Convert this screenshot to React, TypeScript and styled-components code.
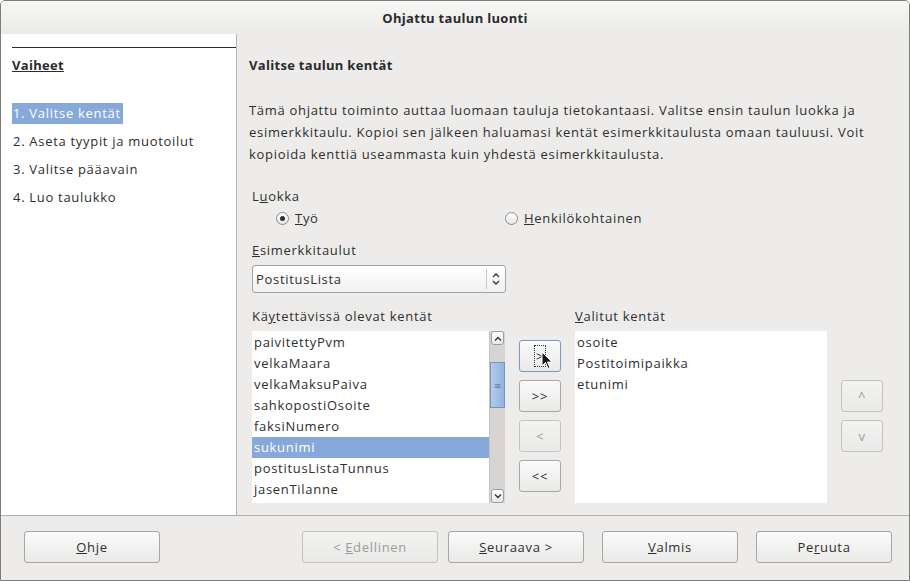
import React from 'react';
import styled, {createGlobalStyle} from "styled-components";

const GlobalStyle = createGlobalStyle`
    html, body {
        margin: 0;
        padding: 0;
        background: #ffffff;
    }
    body {
        font-family: "Open Sans", "DejaVu Sans", sans-serif;
        font-size: 13px;
        letter-spacing: 0.7px;
        color: #2e2e2e;
    }
`;

const Window = styled.div`
    width: 910px;
    height: 581px;
    box-sizing: border-box;
    border: 1px solid #7c7c7c;
    border-radius: 5px 5px 0 0;
    display: flex;
    flex-direction: column;
    overflow: hidden;
    background: #edeceb;
`;

const TitleBar = styled.div`
    height: 33px;
    flex-shrink: 0;
    display: flex;
    align-items: center;
    justify-content: center;
    font-weight: 700;
    font-size: 13px;
    letter-spacing: 0.3px;
    color: #2b2b2b;
    background: linear-gradient(#f7f7f6, #ebeae9);
`;

const Body = styled.div`
    flex: 1;
    display: flex;
    min-height: 0;
`;

const Sidebar = styled.div`
    width: 236px;
    flex-shrink: 0;
    background: #ffffff;
    border-right: 1px solid #b8b7b5;
    padding: 13px 0 0 11px;
    box-sizing: border-box;
`;

const SideRule = styled.div`
    height: 1px;
    background: #2b2b2b;
`;

const SideTitle = styled.div`
    margin-top: 8px;
    line-height: 18px;
    font-weight: 700;
    letter-spacing: 0.3px;
    text-decoration: underline;
    color: #2b2b2b;
`;

const StepList = styled.div`
    margin-top: 29px;
    display: flex;
    flex-direction: column;
    gap: 7px;
`;

const Step = styled.div<{ $active?: boolean }>`
    align-self: flex-start;
    line-height: 21px;
    padding: 0 2px 0 1px;
    color: ${p => p.$active ? '#ffffff' : '#2e2e2e'};
    background: ${p => p.$active ? '#86a9d9' : 'transparent'};
`;

const Main = styled.div`
    flex: 1;
    padding: 21px 0 0 12px;
    box-sizing: border-box;
`;

const Heading = styled.div`
    line-height: 20px;
    font-weight: 700;
    letter-spacing: 0.3px;
    color: #2b2b2b;
`;

const Intro = styled.p`
    margin: 24px 0 0;
    line-height: 22px;
    white-space: nowrap;
`;

const Indented = styled.div`
    padding-left: 3px;
`;

const Label = styled.div<{ $top: number }>`
    margin-top: ${p => p.$top}px;
    line-height: 20px;
`;

const Mn = styled.span`
    text-decoration: underline;
`;

const RadioRow = styled.div`
    display: grid;
    grid-template-columns: 229px auto;
    padding-left: 24px;
    margin-top: 2px;
    height: 20px;
    align-items: center;
`;

const RadioItem = styled.label`
    display: flex;
    align-items: center;
    gap: 6px;
`;

const RadioDot = styled.span<{ $checked?: boolean }>`
    width: 11px;
    height: 11px;
    border-radius: 50%;
    border: 1px solid #8a8a8a;
    background: linear-gradient(#ffffff, #e6e6e6);
    display: flex;
    align-items: center;
    justify-content: center;
    &::after {
        content: "";
        width: 5px;
        height: 5px;
        border-radius: 50%;
        background: ${p => p.$checked ? '#2e2e2e' : 'transparent'};
    }
`;

const Combo = styled.div`
    margin-top: 5px;
    width: 254px;
    height: 28px;
    box-sizing: border-box;
    border: 1px solid #a3a3a3;
    border-radius: 3px;
    background: linear-gradient(#ffffff, #f1f1f1);
    display: flex;
    align-items: center;
`;

const ComboText = styled.div`
    flex: 1;
    padding-left: 3px;
`;

const ComboArrow = styled.div`
    width: 18px;
    height: 20px;
    border-left: 1px solid #c8c8c8;
    display: flex;
    align-items: center;
    justify-content: center;
`;

const FieldsGrid = styled.div`
    margin-top: 13px;
    display: grid;
    grid-template-columns: 253px 42px 252px 42px;
    column-gap: 14px;
    grid-template-rows: 20px 172px;
    row-gap: 5px;
`;

const FieldLabel = styled.div`
    line-height: 20px;
`;

const ListBox = styled.div`
    background: #ffffff;
    display: flex;
    overflow: hidden;
`;

const ListItems = styled.div`
    flex: 1;
    padding-top: 1px;
`;

const ListItem = styled.div<{ $selected?: boolean }>`
    height: 21px;
    line-height: 21px;
    padding-left: 2px;
    color: ${p => p.$selected ? '#ffffff' : '#2e2e2e'};
    background: ${p => p.$selected ? '#86a9d9' : 'transparent'};
`;

const ScrollBar = styled.div`
    width: 15px;
    display: flex;
    flex-direction: column;
    background: #d6d5d4;
    border-left: 1px solid #c4c3c2;
`;

const ScrollStep = styled.div`
    height: 14px;
    margin: 0 1px;
    box-sizing: border-box;
    border: 1px solid #9c9c9c;
    border-radius: 3px;
    background: linear-gradient(#ffffff, #e8e8e8);
    display: flex;
    align-items: center;
    justify-content: center;
`;

const ScrollTrack = styled.div`
    flex: 1;
    padding-top: 17px;
`;

const ScrollThumb = styled.div`
    height: 46px;
    box-sizing: border-box;
    border: 1px solid #6f95c8;
    background: linear-gradient(90deg, #b5cbea, #93b3df);
    display: flex;
    align-items: center;
    justify-content: center;
    color: #5a7fb3;
    font-size: 9px;
    letter-spacing: 0;
`;

const ButtonColumn = styled.div<{ $top: number }>`
    padding-top: ${p => p.$top}px;
    display: flex;
    flex-direction: column;
    gap: 8px;
`;

const Button = styled.button<{ $focus?: boolean }>`
    position: relative;
    height: 32px;
    box-sizing: border-box;
    border: 1px solid ${p => p.$focus ? '#7b98c4' : '#a8a7a6'};
    border-radius: 3px;
    background: linear-gradient(#fbfbfb, #e9e9e8);
    font-family: "Open Sans", "DejaVu Sans", sans-serif;
    font-size: 13px;
    letter-spacing: 0.7px;
    color: #2e2e2e;
    padding: 0;
    display: flex;
    align-items: center;
    justify-content: center;
    &:disabled {
        color: #9b9b9b;
        border-color: #c3c2c1;
        background: linear-gradient(#f3f3f2, #e9e9e8);
    }
`;

const FocusRing = styled.span`
    border: 1px dotted #2e2e2e;
    padding: 3px 1px;
    line-height: 14px;
`;

const Cursor = styled.svg`
    position: absolute;
    left: 21px;
    top: 10px;
`;

const Footer = styled.div`
    height: 65px;
    flex-shrink: 0;
    border-top: 1px solid #b0afad;
    display: flex;
    align-items: flex-start;
    padding: 15px 0 0 23px;
    box-sizing: border-box;
`;

const FooterButton = styled(Button)<{ $gap?: number }>`
    width: 136px;
    margin-left: ${p => p.$gap ?? 0}px;
`;

const leftItems = ['paivitettyPvm', 'velkaMaara', 'velkaMaksuPaiva', 'sahkopostiOsoite', 'faksiNumero', 'sukunimi', 'postitusListaTunnus', 'jasenTilanne'];
const rightItems = ['osoite', 'Postitoimipaikka', 'etunimi'];

const Chevron = ({up}: { up: boolean }) => (
    <svg width="8" height="5" viewBox="0 0 8 5">
        <path d={up ? 'M1 4.5 L4 1.5 L7 4.5' : 'M1 0.5 L4 3.5 L7 0.5'} fill="none" stroke="#2e2e2e" strokeWidth="1.3"/>
    </svg>
);

const App = () => {
    return (
        <>
            <GlobalStyle/>
            <Window>
                <TitleBar>Ohjattu taulun luonti</TitleBar>
                <Body>
                    <Sidebar>
                        <SideRule/>
                        <SideTitle>Vaiheet</SideTitle>
                        <StepList>
                            <Step $active>1. Valitse kentät</Step>
                            <Step>2. Aseta tyypit ja muotoilut</Step>
                            <Step>3. Valitse pääavain</Step>
                            <Step>4. Luo taulukko</Step>
                        </StepList>
                    </Sidebar>
                    <Main>
                        <Heading>Valitse taulun kentät</Heading>
                        <Intro>
                            Tämä ohjattu toiminto auttaa luomaan tauluja tietokantaasi. Valitse ensin taulun luokka ja<br/>
                            esimerkkitaulu. Kopioi sen jälkeen haluamasi kentät esimerkkitaulusta omaan tauluusi. Voit<br/>
                            kopioida kenttiä useammasta kuin yhdestä esimerkkitaulusta.
                        </Intro>
                        <Indented>
                            <Label $top={21}>L<Mn>u</Mn>okka</Label>
                            <RadioRow>
                                <RadioItem><RadioDot $checked/><span><Mn>T</Mn>yö</span></RadioItem>
                                <RadioItem><RadioDot/><span><Mn>H</Mn>enkilökohtainen</span></RadioItem>
                            </RadioRow>
                            <Label $top={12}><Mn>E</Mn>simerkkitaulut</Label>
                            <Combo>
                                <ComboText>PostitusLista</ComboText>
                                <ComboArrow>
                                    <svg width="10" height="16" viewBox="0 0 10 16">
                                        <path d="M2 6 L5 3 L8 6 M2 10 L5 13 L8 10" fill="none" stroke="#2e2e2e" strokeWidth="1.3"/>
                                    </svg>
                                </ComboArrow>
                            </Combo>
                            <FieldsGrid>
                                <FieldLabel>Kä<Mn>y</Mn>tettävissä olevat kentät</FieldLabel>
                                <div/>
                                <FieldLabel><Mn>V</Mn>alitut kentät</FieldLabel>
                                <div/>
                                <ListBox>
                                    <ListItems>
                                        {leftItems.map(item =>
                                            <ListItem key={item} $selected={item === 'sukunimi'}>{item}</ListItem>
                                        )}
                                    </ListItems>
                                    <ScrollBar>
                                        <ScrollStep><Chevron up/></ScrollStep>
                                        <ScrollTrack>
                                            <ScrollThumb>≡</ScrollThumb>
                                        </ScrollTrack>
                                        <ScrollStep><Chevron up={false}/></ScrollStep>
                                    </ScrollBar>
                                </ListBox>
                                <ButtonColumn $top={9}>
                                    <Button $focus>
                                        <FocusRing>&gt;</FocusRing>
                                        <Cursor width="12" height="19" viewBox="0 0 12 19">
                                            <path d="M1 1 L1 15 L4.5 11.5 L7 17.5 L9 16.5 L6.5 11 L11 11 Z" fill="#1a1a1a" stroke="#ffffff" strokeWidth="1"/>
                                        </Cursor>
                                    </Button>
                                    <Button>&gt;&gt;</Button>
                                    <Button disabled>&lt;</Button>
                                    <Button>&lt;&lt;</Button>
                                </ButtonColumn>
                                <ListBox>
                                    <ListItems>
                                        {rightItems.map(item =>
                                            <ListItem key={item}>{item}</ListItem>
                                        )}
                                    </ListItems>
                                </ListBox>
                                <ButtonColumn $top={49}>
                                    <Button disabled>^</Button>
                                    <Button disabled>v</Button>
                                </ButtonColumn>
                            </FieldsGrid>
                        </Indented>
                    </Main>
                </Body>
                <Footer>
                    <FooterButton><span><Mn>O</Mn>hje</span></FooterButton>
                    <FooterButton $gap={142} disabled><span>&lt; <Mn>E</Mn>dellinen</span></FooterButton>
                    <FooterButton $gap={10}><span><Mn>S</Mn>euraava &gt;</span></FooterButton>
                    <FooterButton $gap={18}><span><Mn>V</Mn>almis</span></FooterButton>
                    <FooterButton $gap={18}><span>Pe<Mn>r</Mn>uuta</span></FooterButton>
                </Footer>
            </Window>
        </>
    );
};

export default App;
